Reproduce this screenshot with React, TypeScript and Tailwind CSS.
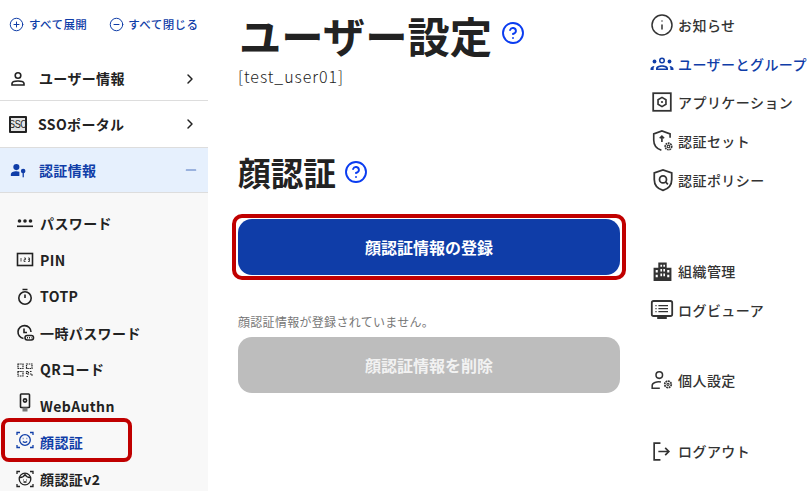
import React from "react";
import { ChevronRight, CirclePlus, CircleMinus, CircleHelp, Info, Minus } from "lucide-react";

type IconProps = { className?: string };

const base = {
  fill: "none",
  stroke: "currentColor",
  strokeWidth: 1.6,
  viewBox: "0 0 20 20",
};

const UserIcon = ({ className }: IconProps) => (
  <svg {...base} className={className}>
    <circle cx="10" cy="6.500" r="2.800" />
    <path d="M4 16v-1.400c0-1.400 2.600-2.600 6-2.600s6 1.200 6 2.600V16z" />
  </svg>
);

const SsoIcon = () => (
  <span className="flex h-[17px] w-[18px] items-center justify-center rounded-[1px] border-2 border-[#222] bg-[#e4e4e4] font-['Liberation_Sans',sans-serif] text-[9px] font-normal leading-none text-[#222]">
    <span className="inline-block scale-y-[1.300] tracking-[-0.300px]">SSO</span>
  </span>
);

const UserKeyIcon = ({ className }: IconProps) => (
  <svg viewBox="0 0 20 20" fill="currentColor" className={className}>
    <circle cx="7.500" cy="6" r="3.600" />
    <path d="M1 16.500v-1.800c0-2.200 3-3.700 6.500-3.700 1.300 0 2.500.2 3.500.6v4.900z" />
    <circle cx="15.500" cy="10.500" r="2.700" />
    <rect x="14.800" y="12" width="1.500" height="6" />
  </svg>
);

const PasswordIcon = ({ className }: IconProps) => (
  <svg viewBox="0 0 20 20" fill="currentColor" className={className}>
    <circle cx="4.500" cy="7" r="1.800" />
    <circle cx="10" cy="7" r="1.800" />
    <circle cx="15.500" cy="7" r="1.800" />
    <rect x="2" y="11.500" width="16" height="1.600" />
  </svg>
);

const PinIcon = ({ className }: IconProps) => (
  <svg {...base} className={className}>
    <rect x="2.500" y="3.500" width="15" height="12" />
    <path d="M6 8v3.500M9 8h1.500v1.700H9v1.800h1.500M13 8h1.500v3.500H13M13 9.700h1.500" strokeWidth="0.800" />
  </svg>
);

const TimerIcon = ({ className }: IconProps) => (
  <svg {...base} className={className}>
    <circle cx="10" cy="11" r="6.200" />
    <path d="M7.500 2.500h5M10 7.500V11" />
  </svg>
);

const OtpIcon = ({ className }: IconProps) => (
  <svg {...base} className={className}>
    <path d="M8.500 15.500a6.500 6.500 0 1 1 7.500-6.500" />
    <path d="M9 5.500V9.500h3" />
    <rect x="10" y="12.500" width="8.500" height="4.500" rx="2.200" />
    <path d="M12 14.800h4.500" strokeDasharray="1 1" />
  </svg>
);

const QrIcon = ({ className }: IconProps) => (
  <svg {...base} strokeWidth="1.200" className={className}>
    <path d="M3 4h5v4.500H3zM11.500 4H17v4.500h-5.500zM3 11.500h5V16H3zM11.500 11.500h2V14h-2zM15 11.500h2M15 14h2v2.500M11.500 16.500h2" strokeDasharray="1.500 .7" />
  </svg>
);

const KeyDeviceIcon = ({ className }: IconProps) => (
  <svg {...base} className={className}>
    <rect x="5.500" y="1" width="9" height="13.500" rx="0.800" />
    <rect x="7.500" y="14.500" width="5" height="4" fill="#777" stroke="none" />
    <circle cx="10" cy="7.500" r="1.600" />
  </svg>
);

const FaceIcon = ({ className }: IconProps) => (
  <svg {...base} strokeWidth="1.300" className={className}>
    <path d="M2 5V2.500h3M15 2.500h3V5M2 15v2.500h3M15 17.500h3V15" />
    <circle cx="10" cy="10" r="5.300" />
    <path d="M7.800 8.500h.6M11.600 8.500h.6M7.800 11.500c1.300 1 3.100 1 4.400 0" />
  </svg>
);

const FaceV2Icon = ({ className }: IconProps) => (
  <svg {...base} strokeWidth="1.300" className={className}>
    <path d="M2 5V2.500h3M15 2.500h3V5M2 15v2.500h3M15 17.500h3V15" />
    <circle cx="10" cy="10" r="5.800" />
    <path d="M5 8.500c2.500 0 4-1 5-3 1 2 2.500 3 5 3M8 11h.6M11.400 11h.6M8.500 13h3" />
  </svg>
);

const GroupIcon = ({ className }: IconProps) => (
  <svg viewBox="0 0 24 20" fill="currentColor" className={className}>
    <path d="M12 3.500a3 3 0 1 1 0 6 3 3 0 0 1 0-6zm0 1.500a1.500 1.500 0 1 0 0 3 1.500 1.500 0 0 0 0-3z" fillRule="evenodd" />
    <path d="M6 16v-1.500c0-2 3-3.200 6-3.200s6 1.200 6 3.200V16zm1.800-1.500h8.400c-.4-1-2.300-1.700-4.200-1.700s-3.800.7-4.200 1.700z" fillRule="evenodd" />
    <circle cx="4.500" cy="7.500" r="1.900" />
    <circle cx="19.500" cy="7.500" r="1.900" />
    <path d="M0.500 16v-1.300c0-1.500 1.600-2.700 4-2.800-.6.700-.9 1.600-.9 2.600V16zM23.500 16v-1.300c0-1.500-1.600-2.700-4-2.800.6.700.9 1.600.9 2.600V16z" />
  </svg>
);

const AppIcon = ({ className }: IconProps) => (
  <svg {...base} className={className}>
    <rect x="2" y="2" width="16" height="16" />
    <path d="M10 5.800l3.600 2.100v4.200L10 14.200l-3.600-2.100V7.900z" strokeWidth="1.500" />
    <circle cx="10" cy="10" r="1" fill="currentColor" stroke="none" />
  </svg>
);

const ShieldGearIcon = ({ className }: IconProps) => (
  <svg viewBox="0 0 22 22" fill="none" stroke="currentColor" strokeWidth="1.500" className={className}>
    <path d="M9.500 19.500C5 18 2.500 14.500 2.500 10V4.500L10 1.800l7.500 2.700V8" />
    <path d="M10 12V7M8 8.500L10 6.500l2 2" />
    <circle cx="16" cy="16" r="3" strokeWidth="1.500" strokeDasharray="1.600 .6" />
    <circle cx="16" cy="16" r="1.200" strokeWidth="1" />
  </svg>
);

const ShieldSearchIcon = ({ className }: IconProps) => (
  <svg viewBox="0 0 22 22" fill="none" stroke="currentColor" strokeWidth="1.600" className={className}>
    <path d="M11 20.500C6 19 3 15 3 10.500V4.500l8-2.800 8 2.800v6c0 4.500-3 8.500-8 10z" />
    <circle cx="11" cy="10.500" r="3.200" />
    <path d="M13.500 13l2 2" />
  </svg>
);

const BuildingIcon = ({ className }: IconProps) => (
  <svg viewBox="0 0 20 20" fill="currentColor" className={className}>
    <path d="M6 1.500h8v5h4.500V19H1.500V6.500H6zM8 3.500v2h1.600v-2zM10.800 3.500v2h1.600v-2zM8 7.500v2.500h1.600V7.500zM10.800 7.500v2.500h1.600V7.500zM3.500 8.500V11h2V8.500zM14.500 8.500V11h2V8.500zM3.500 13v2.500h2V13zM8 12v2.500h1.600V12zM10.800 12v2.500h1.600V12zM14.500 13v2.500h2V13z" fillRule="evenodd" />
  </svg>
);

const LogViewIcon = ({ className }: IconProps) => (
  <svg {...base} strokeWidth="1.500" className={className}>
    <rect x="1.500" y="2.500" width="17" height="12.500" rx="1.500" />
    <path d="M7 6.300h8M7 8.800h8M7 11.300h8M4.500 6.300h1M4.500 8.800h1M4.500 11.300h1" strokeWidth="1.100" />
    <path d="M6 16.500h8" strokeWidth="2" />
  </svg>
);

const UserGearIcon = ({ className }: IconProps) => (
  <svg viewBox="0 0 22 20" fill="none" stroke="currentColor" strokeWidth="1.400" className={className}>
    <circle cx="8.500" cy="5.500" r="3" />
    <path d="M10 11.800c-4-.6-8 .8-8 3.200M2 15v2.500h7" />
    <circle cx="16.500" cy="14" r="3" strokeWidth="1.600" strokeDasharray="1.700 .6" />
    <circle cx="16.500" cy="14" r="1" strokeWidth="1" />
  </svg>
);

const LogoutIcon = ({ className }: IconProps) => (
  <svg {...base} className={className}>
    <path d="M9 2H3v16h6M7 10h10M13.500 6.500L17 10l-3.500 3.500" />
  </svg>
);

const subItems = [
  { label: "パスワード", Icon: PasswordIcon },
  { label: "PIN", Icon: PinIcon },
  { label: "TOTP", Icon: TimerIcon },
  { label: "一時パスワード", Icon: OtpIcon },
  { label: "QRコード", Icon: QrIcon },
  { label: "WebAuthn", Icon: KeyDeviceIcon, raised: true },
  { label: "顔認証", Icon: FaceIcon, active: true, raised: true },
  { label: "顔認証v2", Icon: FaceV2Icon },
];

function Sidebar() {
  return (
    <aside className="flex h-[491px] w-[208px] shrink-0 flex-col overflow-hidden">
      <div className="flex h-[57px] shrink-0 items-start pl-[9px] pt-[16px] text-[11.500px] font-medium leading-[17px] tracking-[0.4px] text-[#0f3da8]">
        <span className="flex items-center gap-[5px]">
          <CirclePlus className="h-[15px] w-[15px]" strokeWidth={1.6} />
          すべて展開
        </span>
        <span className="ml-[22px] flex items-center gap-[4px]">
          <CircleMinus className="h-[15px] w-[15px]" strokeWidth={1.6} />
          すべて閉じる
        </span>
      </div>
      <div className="flex h-[44px] shrink-0 items-center border-b border-[#ddd] pl-[8px] pr-[10px] text-[#222]">
        <UserIcon className="h-[20px] w-[20px]" />
        <span className="ml-[11px] flex-1 text-[14px] font-bold tracking-[0.35px]">ユーザー情報</span>
        <ChevronRight className="h-[16px] w-[16px]" strokeWidth={2.200} />
      </div>
      <div className="flex h-[47px] shrink-0 items-center border-b border-[#ddd] pl-[9px] pr-[10px] text-[#222]">
        <SsoIcon />
        <span className="ml-[11px] flex-1 text-[14px] font-bold tracking-[0.35px]">SSOポータル</span>
        <ChevronRight className="h-[16px] w-[16px]" strokeWidth={2.200} />
      </div>
      <div className="flex h-[45px] shrink-0 items-center border-b border-[#ddd] bg-[#e6f0fd] pl-[10px] pr-[9px] text-[#0f3da8]">
        <UserKeyIcon className="h-[17px] w-[17px]" />
        <span className="ml-[12px] flex-1 text-[14px] font-bold tracking-[0.35px]">認証情報</span>
        <Minus className="h-[16px] w-[16px] text-[#4f74c0]" strokeWidth={1.800} />
      </div>
      <ul className="flex shrink-0 flex-col bg-[#f8f8f8] pt-[12.500px]">
        {subItems.map(({ label, Icon, active, raised }) => (
          <li
            key={label}
            className={`flex h-[36.500px] shrink-0 items-center gap-[5px] pl-[15px] text-[14px] font-bold tracking-[0.4px] ${
              active ? "text-[#0f3da8]" : "text-[#222]"
            }`}
          >
            <Icon className={`h-[20px] w-[20px] shrink-0 ${raised ? "-translate-y-[3px]" : ""}`} />
            {label}
          </li>
        ))}
      </ul>
    </aside>
  );
}

const HelpIcon = () => <CircleHelp className="h-[24px] w-[24px] text-[#0a3cf0]" strokeWidth={1.900} />;

function Main() {
  return (
    <main className="ml-[30px] flex w-[382px] shrink-0 flex-col text-[#222]">
      <div className="flex h-[62px] items-center gap-[9px] pl-[1px] pt-[8px]">
        <h1 className="text-[42.330px] font-bold leading-none">ユーザー設定</h1>
        <span className="-mt-[4px]">
          <HelpIcon />
        </span>
      </div>
      <p className="mt-[3px] text-[16px] font-light leading-[22px] tracking-[0.950px]">[test_user01]</p>
      <div className="mt-[63px] flex h-[44px] items-center gap-[8px]">
        <h2 className="text-[32.670px] font-bold leading-none">顔認証</h2>
        <span className="-mt-[1px]">
          <HelpIcon />
        </span>
      </div>
      <button className="relative mt-[25px] flex h-[56px] shrink-0 items-center justify-center rounded-[14px] bg-[#0f3da8] text-[16px] font-bold text-white">
        顔認証情報の登録
        <span className="absolute -inset-x-[6px] -inset-y-[5px] rounded-[10px] border-[4px] border-[#c00000]" />
      </button>
      <p className="mt-[38px] text-[12px] leading-[18px] tracking-[0.3px] text-[#777]">顔認証情報が登録されていません。</p>
      <button className="mt-[6px] flex h-[56px] shrink-0 items-center justify-center rounded-[14px] bg-[#bdbdbd] text-[16px] font-bold text-[#f2f2f2]">
        顔認証情報を削除
      </button>
    </main>
  );
}

function NavItem({ label, icon, active, className }: { label: string; icon: React.ReactNode; active?: boolean; className?: string }) {
  return (
    <div
      className={`flex h-[22px] items-center whitespace-nowrap text-[14px] font-medium tracking-[0.45px] ${
        active ? "font-bold text-[#0f3da8]" : "text-[#333]"
      } ${className ?? ""}`}
    >
      <span className="flex w-[28px] shrink-0 items-center">{icon}</span>
      {label}
    </div>
  );
}

function RightNav() {
  return (
    <nav className="ml-[30px] flex w-[158px] shrink-0 flex-col overflow-hidden pt-[14px]">
      <NavItem label="お知らせ" icon={<Info className="h-[24px] w-[24px] shrink-0" strokeWidth={1.500} />} />
      <NavItem className="mt-[17px]" active label="ユーザーとグループ" icon={<GroupIcon className="h-[20px] w-[24px] shrink-0" />} />
      <NavItem className="mt-[16px]" label="アプリケーション" icon={<AppIcon className="ml-[1px] h-[22px] w-[22px] shrink-0" />} />
      <NavItem className="mt-[17px]" label="認証セット" icon={<ShieldGearIcon className="ml-[1px] h-[24px] w-[24px] shrink-0" />} />
      <NavItem className="mt-[17px]" label="認証ポリシー" icon={<ShieldSearchIcon className="ml-[1px] h-[24px] w-[24px] shrink-0" />} />
      <NavItem className="mt-[69px]" label="組織管理" icon={<BuildingIcon className="ml-[2px] h-[21px] w-[21px] shrink-0" />} />
      <NavItem className="mt-[17px]" label="ログビューア" icon={<LogViewIcon className="h-[24px] w-[24px] shrink-0" />} />
      <NavItem className="mt-[48px]" label="個人設定" icon={<UserGearIcon className="h-[22px] w-[24px] shrink-0" />} />
      <NavItem className="mt-[49px]" label="ログアウト" icon={<LogoutIcon className="ml-[1px] h-[21px] w-[21px] shrink-0" />} />
    </nav>
  );
}

export default function App() {
  return (
    <div className="relative flex h-[491px] w-[808px] overflow-hidden bg-white font-['Noto_Sans_CJK_JP','Noto_Sans',sans-serif]">
      <Sidebar />
      <Main />
      <RightNav />
      {/* red annotation round the active menu entry */}
      <div className="absolute left-[1px] top-[418px] h-[44px] w-[131px] rounded-[8px] border-[4px] border-[#c00000]" />
    </div>
  );
}
